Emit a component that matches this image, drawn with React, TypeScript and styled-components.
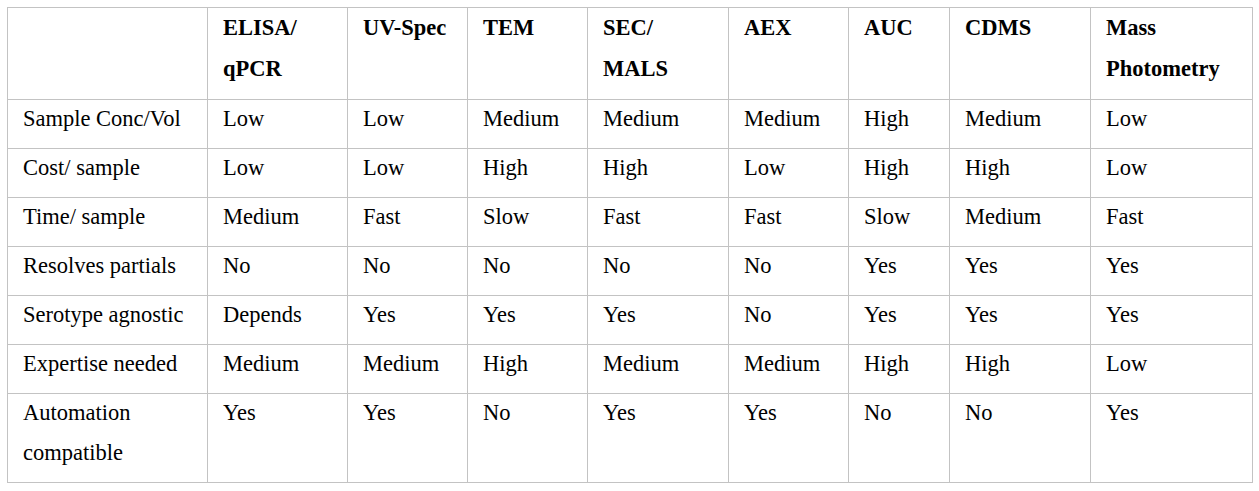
import React from "react";
import styled, { createGlobalStyle } from "styled-components";

const GlobalStyle = createGlobalStyle`
  html, body {
    margin: 0;
    padding: 0;
    background: #ffffff;
  }
  body {
    font-family: "Liberation Serif", "Times New Roman", serif;
    color: #000000;
  }
`;

const Page = styled.div`
  padding: 7px 0 0 7px;
`;

const Table = styled.table`
  border-collapse: collapse;
  table-layout: fixed;
  width: 1245px;
  font-family: "Liberation Serif", "Times New Roman", serif;
  font-size: 22.5px;
  color: #000000;
`;

const Row = styled.tr<{ $h: number }>`
  height: ${(p) => p.$h}px;
`;

const Cell = styled.td`
  border: 1px solid #c3c3c3;
  padding: 0 10px 0 15px;
  vertical-align: top;
  line-height: 40px;
  white-space: nowrap;
  font-weight: 400;
  overflow: hidden;
`;

const HeadCell = styled.th`
  border: 1px solid #c3c3c3;
  padding: 0 10px 0 15px;
  vertical-align: top;
  text-align: left;
  line-height: 41px;
  white-space: nowrap;
  font-weight: 700;
  overflow: hidden;
`;

const Text = styled.div`
  margin-top: -1px;
`;

const widths = [200, 140, 120, 120, 141, 120, 101, 141, 162];

const headers: React.ReactNode[] = [
  "",
  <>ELISA/<br />qPCR</>,
  "UV-Spec",
  "TEM",
  <>SEC/<br />MALS</>,
  "AEX",
  "AUC",
  "CDMS",
  <>Mass<br />Photometry</>,
];

const rows: { label: React.ReactNode; values: string[]; h: number }[] = [
  { label: "Sample Conc/Vol", values: ["Low", "Low", "Medium", "Medium", "Medium", "High", "Medium", "Low"], h: 49 },
  { label: "Cost/ sample", values: ["Low", "Low", "High", "High", "Low", "High", "High", "Low"], h: 49 },
  { label: "Time/ sample", values: ["Medium", "Fast", "Slow", "Fast", "Fast", "Slow", "Medium", "Fast"], h: 49 },
  { label: "Resolves partials", values: ["No", "No", "No", "No", "No", "Yes", "Yes", "Yes"], h: 49 },
  { label: "Serotype agnostic", values: ["Depends", "Yes", "Yes", "Yes", "No", "Yes", "Yes", "Yes"], h: 49 },
  { label: "Expertise needed", values: ["Medium", "Medium", "High", "Medium", "Medium", "High", "High", "Low"], h: 49 },
  { label: <>Automation<br />compatible</>, values: ["Yes", "Yes", "No", "Yes", "Yes", "No", "No", "Yes"], h: 89 },
];

export default function App() {
  return (
    <>
      <GlobalStyle />
      <Page>
        <Table>
          <colgroup>
            {widths.map((w, i) => (
              <col key={i} width={w} />
            ))}
          </colgroup>
          <thead>
            <Row $h={92}>
              {headers.map((h, i) => (
                <HeadCell key={i}>
                  <Text>{h}</Text>
                </HeadCell>
              ))}
            </Row>
          </thead>
          <tbody>
            {rows.map((r, i) => (
              <Row key={i} $h={r.h}>
                <Cell>
                  <Text>{r.label}</Text>
                </Cell>
                {r.values.map((v, j) => (
                  <Cell key={j}>
                    <Text>{v}</Text>
                  </Cell>
                ))}
              </Row>
            ))}
          </tbody>
        </Table>
      </Page>
    </>
  );
}
